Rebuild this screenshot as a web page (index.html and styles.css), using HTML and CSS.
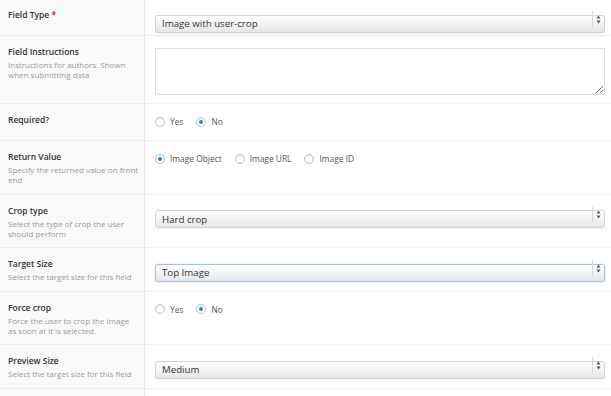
FILE: index.html
```html
<!DOCTYPE html>
<html lang="en">
<head>
    <meta charset="UTF-8">
    <title>Field settings</title>
    <link rel="stylesheet" href="styles.css">
</head>
<body>
<div class="field-settings">
    <div class="row">
        <div class="label"><label>Field Type <span class="req">*</span></label></div>
        <div class="input">
            <div class="select-wrap">
                <select><option>Image with user-crop</option></select>
                <span class="arrows"><svg width="5" height="9" viewBox="0 0 5 9"><path d="M2.5 0.5L4.5 3.5H0.5Z M2.5 8.5L4.5 5.5H0.5Z" fill="#555"/></svg></span>
            </div>
        </div>
    </div>
    <div class="row">
        <div class="label">
            <label>Field Instructions</label>
            <p class="desc">Instructions for authors. Shown when submitting data</p>
        </div>
        <div class="input">
            <textarea></textarea>
        </div>
    </div>
    <div class="row">
        <div class="label"><label>Required?</label></div>
        <div class="input">
            <ul class="radios">
                <li><label><input type="radio" name="required"> Yes</label></li>
                <li><label><input type="radio" name="required" checked> No</label></li>
            </ul>
        </div>
    </div>
    <div class="row">
        <div class="label">
            <label>Return Value</label>
            <p class="desc">Specify the returned value on front end</p>
        </div>
        <div class="input">
            <ul class="radios">
                <li><label><input type="radio" name="return" checked> Image Object</label></li>
                <li><label><input type="radio" name="return"> Image URL</label></li>
                <li><label><input type="radio" name="return"> Image ID</label></li>
            </ul>
        </div>
    </div>
    <div class="row">
        <div class="label">
            <label>Crop type</label>
            <p class="desc">Select the type of crop the user should perform</p>
        </div>
        <div class="input">
            <div class="select-wrap">
                <select><option>Hard crop</option></select>
                <span class="arrows"><svg width="5" height="9" viewBox="0 0 5 9"><path d="M2.5 0.5L4.5 3.5H0.5Z M2.5 8.5L4.5 5.5H0.5Z" fill="#555"/></svg></span>
            </div>
        </div>
    </div>
    <div class="row">
        <div class="label">
            <label>Target Size</label>
            <p class="desc">Select the target size for this field</p>
        </div>
        <div class="input">
            <div class="select-wrap focus">
                <select><option>Top Image</option></select>
                <span class="arrows"><svg width="5" height="9" viewBox="0 0 5 9"><path d="M2.5 0.5L4.5 3.5H0.5Z M2.5 8.5L4.5 5.5H0.5Z" fill="#555"/></svg></span>
            </div>
        </div>
    </div>
    <div class="row">
        <div class="label">
            <label>Force crop</label>
            <p class="desc">Force the user to crop the image<br>as soon at it is selected.</p>
        </div>
        <div class="input">
            <ul class="radios">
                <li><label><input type="radio" name="force"> Yes</label></li>
                <li><label><input type="radio" name="force" checked> No</label></li>
            </ul>
        </div>
    </div>
    <div class="row">
        <div class="label">
            <label>Preview Size</label>
            <p class="desc">Select the target size for this field</p>
        </div>
        <div class="input">
            <div class="select-wrap">
                <select><option>Medium</option></select>
                <span class="arrows"><svg width="5" height="9" viewBox="0 0 5 9"><path d="M2.5 0.5L4.5 3.5H0.5Z M2.5 8.5L4.5 5.5H0.5Z" fill="#555"/></svg></span>
            </div>
        </div>
    </div>
    <div class="row">
        <div class="label"></div>
        <div class="input"></div>
    </div>
</div>
</body>
</html>
```
FILE: styles.css
```css
body { margin: 0; background: #fff; font-family: "Open Sans", sans-serif; color: #333; overflow: hidden; }
.field-settings { margin-top: -1px; }
.row { display: flex; border-bottom: 1px solid #eeeeee; }
.label { width: 136px; flex: none; background: #f9f9f9; border-right: 1px solid #e8e8e8; padding: 10px 0 8.5px 8px; }
.label label { display: block; font-size: 8.5px; font-weight: 600; line-height: 12px; color: #333; }
.req { color: #e00; }
.desc { margin: 2px 0 0; font-size: 8px; line-height: 10px; color: #999; }
.input { flex: 1; padding: 11px 6px 7px 10px; }

.select-wrap { position: relative; height: 18px; }
.select-wrap select { appearance: none; -webkit-appearance: none; width: 100%; height: 18px; margin: 0; padding: 0 0 0 6px; border: 1px solid #d2d2d2; border-radius: 3px; background: linear-gradient(#ffffff, #f3f3f3 50%, #e6e6e6); box-shadow: 0 1px 1px rgba(0,0,0,0.05); font-family: "Open Sans", sans-serif; font-size: 9.7px; color: #333; }
.select-wrap.focus select { border-color: #a3bfdc; box-shadow: 0 0 2px rgba(80,140,200,0.35); }
.arrows { position: absolute; right: 1px; top: 1px; bottom: 1px; width: 11px; border-left: 1px solid #d8d8d8; display: flex; align-items: center; justify-content: center; }

textarea { display: block; box-sizing: border-box; width: 100%; height: 47px; margin: 1px 0; border: 1px solid #dddddd; border-radius: 1px; resize: vertical; background: #fff; }

.radios { list-style: none; margin: 0 0 5px; padding: 0; display: flex; gap: 13px; line-height: 13px; }
.radios label { display: flex; align-items: center; gap: 5px; font-size: 8.4px; color: #555; }
.radios input { appearance: none; -webkit-appearance: none; width: 10px; height: 10px; margin: 0; border: 1px solid #bdbdbd; border-radius: 50%; background: #fff; box-shadow: inset 0 1px 2px rgba(0,0,0,0.08); position: relative; }
.radios input:checked::after { content: ""; position: absolute; left: 2px; top: 2px; width: 4px; height: 4px; border-radius: 50%; background: #1e8cbe; }
```
